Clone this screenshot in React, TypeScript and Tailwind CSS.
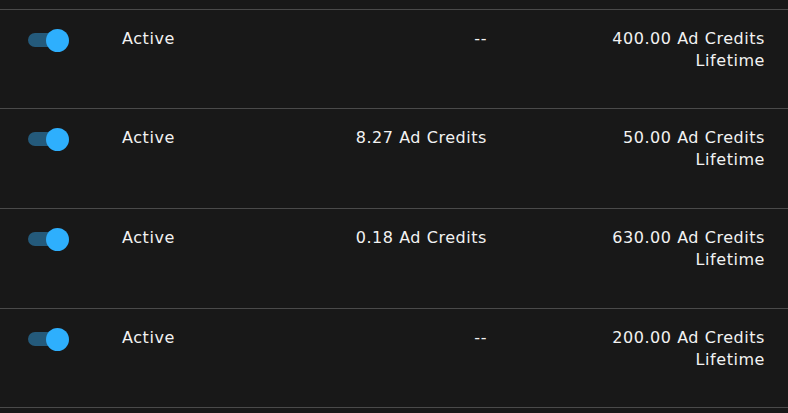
import React from "react";

const rows = [
  { credits: "--", lifetime: "400.00 Ad Credits", h: "h-[99px]" },
  { credits: "8.27 Ad Credits", lifetime: "50.00 Ad Credits", h: "h-[100px]" },
  { credits: "0.18 Ad Credits", lifetime: "630.00 Ad Credits", h: "h-[100px]" },
  { credits: "--", lifetime: "200.00 Ad Credits", h: "h-[100px]" },
];

function Toggle() {
  return (
    <div className="relative h-[23px] w-[42px]">
      <div className="absolute left-0 top-[4px] h-[14px] w-[34px] rounded-full bg-[#245a7b]" />
      <div className="absolute left-[18px] top-0 h-[23px] w-[23px] rounded-full bg-[#2eaffd]" />
    </div>
  );
}

export default function App() {
  return (
    <div
      className="h-[413px] w-[788px] overflow-hidden bg-[#181818] pt-[9px] text-[16px] leading-[22px] tracking-[0.55px] text-[#f2f2f2]"
      style={{ fontFamily: '"DejaVu Sans", sans-serif' }}
    >
      {rows.map((r, i) => (
        <div
          key={i}
          className={`grid ${r.h} grid-cols-[94px_120px_245px_1fr] border-t border-[#4a4a4a] pl-[28px] pr-[23px] pt-[18px] ${i === rows.length - 1 ? "border-b" : ""}`}
        >
          <div className="pt-[1px]">
            <Toggle />
          </div>
          <div>Active</div>
          <div className="text-right">{r.credits}</div>
          <div className="text-right">
            <div>{r.lifetime}</div>
            <div>Lifetime</div>
          </div>
        </div>
      ))}
    </div>
  );
}
